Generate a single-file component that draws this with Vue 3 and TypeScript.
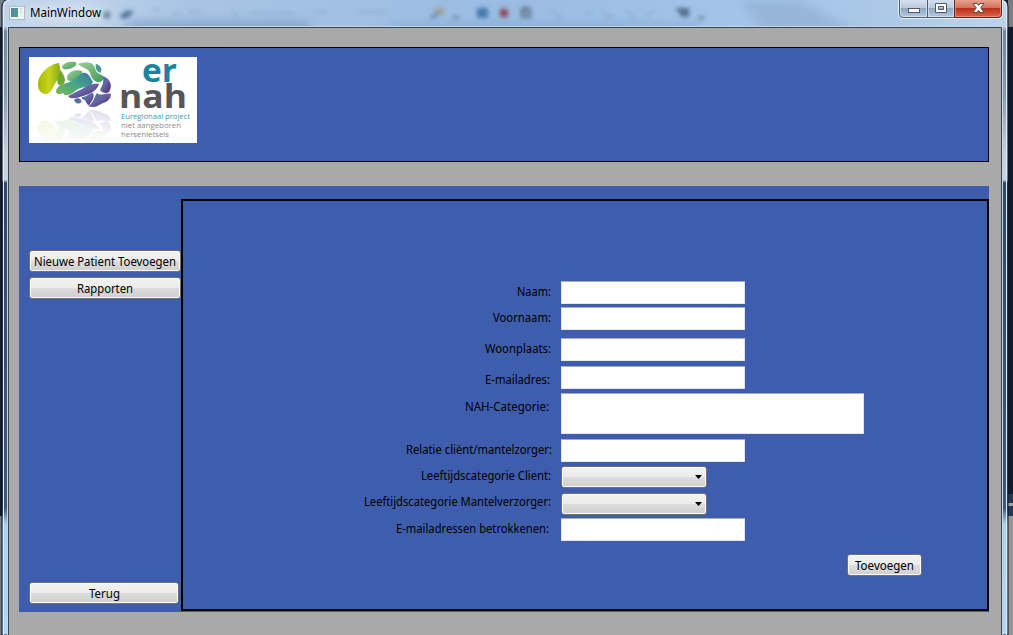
<script setup lang="ts">
interface Field {
  label: string
  kind: 'text' | 'area' | 'combo'
  gap: number
  drop: number
  inset: number
  width: number
}

const fields: Field[] = [
  { label: 'Naam:', kind: 'text', gap: 0, drop: 2, inset: 10, width: 34 },
  { label: 'Voornaam:', kind: 'text', gap: 3, drop: 2, inset: 10, width: 58 },
  { label: 'Woonplaats:', kind: 'text', gap: 8, drop: 2, inset: 10, width: 66 },
  { label: 'E-mailadres:', kind: 'text', gap: 5, drop: 5, inset: 11, width: 65 },
  { label: 'NAH-Categorie:', kind: 'area', gap: 4, drop: 5, inset: 12, width: 84 },
  { label: 'Relatie cliënt/mantelzorger:', kind: 'text', gap: 5, drop: 2, inset: 9, width: 146 },
  { label: 'Leeftijdscategorie Client:', kind: 'combo', gap: 4, drop: 1, inset: 10, width: 130 },
  { label: 'Leeftijdscategorie Mantelverzorger:', kind: 'combo', gap: 5, drop: 0, inset: 10, width: 187 },
  { label: 'E-mailadressen betrokkenen:', kind: 'text', gap: 3, drop: 2, inset: 12, width: 153 },
]
</script>

<template>
  <div class="window">
    <svg class="glass" width="1013" height="635" viewBox="0 0 1013 635" aria-hidden="true">
      <defs>
        <linearGradient id="bar" x1="0" x2="1" y1="0" y2="0">
          <stop offset="0" stop-color="#c0d3ea" />
          <stop offset=".07" stop-color="#c0d4ea" />
          <stop offset=".18" stop-color="#a9c4e4" />
          <stop offset=".5" stop-color="#9abce3" />
          <stop offset=".78" stop-color="#a5c6eb" />
          <stop offset=".86" stop-color="#aac7e7" />
          <stop offset="1" stop-color="#bdd3ec" />
        </linearGradient>
        <linearGradient id="side" x1="0" x2="0" y1="0" y2="635" gradientUnits="userSpaceOnUse">
          <stop offset="0" stop-color="#bdd3ec" />
          <stop offset=".042" stop-color="#b4c9df" />
          <stop offset=".05" stop-color="#75869a" />
          <stop offset=".15" stop-color="#8b9aad" />
          <stop offset=".24" stop-color="#c6cedb" />
          <stop offset=".283" stop-color="#c9d2df" />
          <stop offset=".288" stop-color="#31486a" />
          <stop offset=".8" stop-color="#405878" />
          <stop offset=".825" stop-color="#a9cff6" />
          <stop offset="1" stop-color="#b2d5fa" />
        </linearGradient>
        <linearGradient id="ctl" x1="0" x2="0" y1="0" y2="1">
          <stop offset="0" stop-color="#d4e0ee" />
          <stop offset=".46" stop-color="#b9cadd" />
          <stop offset=".48" stop-color="#91a7c1" />
          <stop offset="1" stop-color="#b4cbe3" />
        </linearGradient>
        <linearGradient id="cls" x1="0" x2="0" y1="0" y2="1">
          <stop offset="0" stop-color="#e5a08f" />
          <stop offset=".46" stop-color="#d3705a" />
          <stop offset=".48" stop-color="#bd3018" />
          <stop offset="1" stop-color="#d9684c" />
        </linearGradient>
        <filter id="soft" x="-40%" y="-80%" width="180%" height="260%"><feGaussianBlur stdDeviation="2" /></filter>
        <filter id="haze" x="0" y="-30" width="1013" height="90" filterUnits="userSpaceOnUse"><feGaussianBlur stdDeviation="6 4" /></filter>
        <clipPath id="top"><rect x="3" y="0" width="1004" height="26" /></clipPath>
      </defs>
      <rect width="1013" height="635" fill="#111c2c" />
      <rect width="4" height="27" fill="#777d87" />
      <rect y="516" width="2" height="119" fill="#777b80" />
      <rect x="1008" width="5" height="27" fill="#7b7d82" />
      <rect x="1008" y="494" width="5" height="22" fill="#263750" />
      <rect x="1008" y="503" width="5" height="3" fill="#9ba4af" />
      <rect x="1008" y="516" width="5" height="119" fill="#969696" />
      <path d="M2 635V7Q2 0 9 -1H1001Q1008 0 1008 7V635Z" fill="url(#side)" stroke="#0c1420" />
      <path d="M3 27V7Q3 0 9 0H1001Q1007 0 1007 7V27Z" fill="url(#bar)" />
      <g clip-path="url(#top)">
        <g filter="url(#haze)">
          <ellipse cx="65" cy="14" rx="48" ry="9" fill="#d9e4f1" opacity=".8" />
          <path d="M130 20H310V34H120Z" fill="#7e9fc6" opacity=".7" />
          <path d="M390 22H700V34H390Z" fill="#86a9d2" opacity=".6" />
          <path d="M740 0H800L860 34H765Z" fill="#8facd0" opacity=".65" />
        </g>
        <g filter="url(#soft)">
          <circle cx="107" cy="15" r="4" fill="#7088a5" />
          <path d="M119 17L124 12 130 10 134 12 126 19Z" fill="#49739e" />
          <g fill="none" stroke="#7f9fc0" stroke-width="2" opacity=".65">
            <path d="M153 10h7M172 13h9M189 12h12M231 10l7 7M250 13h44M313 12h14M358 12h28M552 10l5 6 5 2M585 13h8M602 11l5 6h8M627 9l5 9h5M646 17l9-7" />
          </g>
          <path d="M433 8H444V14L438 16Z" fill="#a1a294" />
          <path d="M431 18L438 13" stroke="#527fac" stroke-width="3" />
          <rect x="453" y="16" width="5" height="3" fill="#66829f" />
          <rect x="477" y="8" width="11" height="10" fill="#477aa9" />
          <circle cx="504" cy="13" r="4.5" fill="#8b4654" />
          <path d="M522 9H530V17H522ZM525 6V11" fill="#85a0b8" stroke="#536a83" stroke-width="2" />
          <path d="M675 8H689V17H682Z" fill="#58708c" />
          <path d="M698 16H704V20H698Z" fill="#7690ad" />
        </g>
      </g>
      <path d="M3.5 635V7Q3.5 .5 10 .5M1006.5 635V7Q1006.5 .5 1000 .5" fill="none" stroke="#e0eefb" />
      <path d="M7.5 635V26.5H1002.5V635" fill="none" stroke="#c6d7e3" />
      <path d="M8.5 635V27.5H1001.5V635" fill="none" stroke="#344653" />
      <rect x="9.5" y="6.5" width="15" height="13" fill="#f1f3f3" stroke="#b3b9c0" />
      <rect x="11" y="8" width="7" height="9" fill="#54988a" />
      <rect x="11" y="8" width="3" height="9" fill="#547fa0" opacity=".55" />
      <path d="M20 9h2M20 12h2" stroke="#b7c9bd" />
      <path d="M898.5 0V14Q898.5 18.500 903 18.500H998Q1002.500 18.500 1002.500 14V0" fill="none" stroke="#e4f0fb" />
      <path d="M899.500 0H928V17.500H903Q899.500 17.500 899.500 14Z" fill="url(#ctl)" />
      <path d="M928 0H954V17.500H928Z" fill="url(#ctl)" />
      <path d="M954 0H1001.500V14Q1001.500 17.500 998 17.500H954Z" fill="url(#cls)" />
      <path d="M899.500 0V14Q899.500 17.500 903 17.500H954M927.500 0V17" fill="none" stroke="#4e5d73" />
      <path d="M954.500 0V17.500H998Q1001.500 17.500 1001.500 14V0" fill="none" stroke="#62201d" />
      <path d="M900.500 1V14Q901 16.500 904 16.500H926.500V0M928.500 0V16.500H953.500V0" fill="none" stroke="#dce9f6" opacity=".7" />
      <path d="M955.500 0V16.500H998Q1000.500 16 1000.500 13V0" fill="none" stroke="#f0a18e" opacity=".65" />
      <rect x="908.500" y="8.500" width="11" height="4" fill="#fff" stroke="#535967" />
      <path fill-rule="evenodd" d="M935.500 3.500H946.500V12.500H935.500ZM938.500 6.500V9.500H943.500V6.500Z" fill="#fff" stroke="#535967" />
      <path d="M973 3.500H977L978.500 5.500 980 3.500H984L980.700 7.800 984 12.500H980L978.500 10.200 977 12.500H973L976.300 7.800Z" fill="#fff" stroke="#5a4a52" />
    </svg>

    <div class="titlebar"><svg width="90" height="20"><text x="0" y="14" textLength="71" lengthAdjust="spacingAndGlyphs">MainWindow</text></svg></div>
    <main class="client">
      <header class="banner">
        <svg class="logo" width="168" height="86" viewBox="0 0 168 86" role="img" aria-label="er nah">
          <defs>
            <linearGradient id="lime"><stop stop-color="#a5b900" /><stop offset=".5" stop-color="#c7d51e" /><stop offset="1" stop-color="#8eac18" /></linearGradient>
            <linearGradient id="mint" x1="0" x2="1" y1="0" y2="1"><stop stop-color="#a1cf94" /><stop offset="1" stop-color="#3e9b5c" /></linearGradient>
            <linearGradient id="sea" x1="0" x2="1" y1="1" y2="0"><stop stop-color="#79b951" /><stop offset=".55" stop-color="#43a48c" /><stop offset="1" stop-color="#38759d" /></linearGradient>
            <linearGradient id="plum" x1="0" x2="1" y1="0" y2="1"><stop stop-color="#4d82ae" /><stop offset=".5" stop-color="#6761a2" /><stop offset="1" stop-color="#4b2366" /></linearGradient>
            <linearGradient id="fade" x1="0" x2="0" y1="0" y2="1"><stop stop-color="#000" /><stop offset=".3" stop-color="#555" /><stop offset="1" stop-color="#fff" /></linearGradient>
            <mask id="reflection"><rect y="5" width="90" height="50" fill="url(#fade)" /></mask>
            <g id="brain">
              <path d="M30 6C21 7 9 16 9 28C9 35 15 39 20 36C24 33 24 29 27 25C31 19 32 12 30 6Z" fill="url(#lime)" />
              <path d="M31.500 12.500C30 17 27 22 29 27C31 30 36 27 36 23C36 19 33 16 31.500 12.500Z" fill="#72a72d" />
              <path d="M46 5C40 4 34 6 33 10C34 14 39 12 43 11C47 9 49 6 46 5Z" fill="url(#mint)" />
              <path d="M53 14C46 12 39 15 38 20C38 25 43 25 47 21C50 18 55 18 53 14Z" fill="url(#mint)" />
              <path d="M49 7C54 5 62 4 65 9C67 13 67 16 71 17C76 19 75 24 71 25C66 26 62 21 61 16C59 11 53 11 49 7Z" fill="url(#mint)" />
              <path d="M67 7C72 8 74 13 71 16C67 14 66 11 67 7Z" fill="#4f9790" />
              <path d="M54 16C48 19 44 24 38 26C32 27 27 30 27 35C28 38 32 37 34 36C36 40 42 38 46 34C52 29 62 31 64 25C61 20 59 15 54 16Z" fill="url(#sea)" />
              <path d="M70 27C63 26 58 29 53 32C48 34 44 37 39 39C41 43 49 41 54 39C61 37 68 34 70 27Z" fill="url(#plum)" />
              <path d="M73 19C79 20 84 26 81 33C79 38 73 36 71 33C73 29 76 24 73 19Z" fill="url(#plum)" />
              <path d="M45 43C47 40 53 41 52.500 45C49 48 46 46 45 43Z" fill="#576fa2" />
              <path d="M53 40C58 40 60 36 64 36C66 40 63 44 60 48C57 48 58 43 53 42Z" fill="url(#plum)" />
              <path d="M68 36C72 40 77 35 82 37C82 42 78 45 74 46C70 48 66 52 59 49C65 46 65 40 68 36Z" fill="url(#plum)" />
            </g>
          </defs>
          <rect width="168" height="86" fill="#fff" />
          <use href="#brain" />
          <g transform="translate(0 94) scale(1 -.82)" opacity=".2"><use href="#brain" mask="url(#reflection)" /></g>
          <text class="wordmark teal" x="113" y="25" textLength="35" lengthAdjust="spacingAndGlyphs">er</text>
          <text class="wordmark gray" x="90" y="51" textLength="68" lengthAdjust="spacingAndGlyphs">nah</text>
          <text class="tag cyan" x="92" y="62" textLength="69" lengthAdjust="spacingAndGlyphs">Euregionaal project</text>
          <text class="tag" x="92" y="71" textLength="60" lengthAdjust="spacingAndGlyphs">niet aangeboren</text>
          <text class="tag" x="92" y="80" textLength="48" lengthAdjust="spacingAndGlyphs">hersenletsels</text>
        </svg>
      </header>
      <section class="workspace">
        <nav class="sidebar">
          <button><svg width="142" height="18"><text x="0" y="13" textLength="142" lengthAdjust="spacingAndGlyphs">Nieuwe Patient Toevoegen</text></svg></button>
          <button><svg width="56" height="18"><text x="0" y="13" textLength="56" lengthAdjust="spacingAndGlyphs">Rapporten</text></svg></button>
          <button class="back"><svg width="31" height="18"><text x="0" y="13" textLength="31" lengthAdjust="spacingAndGlyphs">Terug</text></svg></button>
        </nav>
        <form class="editor" @submit.prevent>
          <div v-for="field in fields" :key="field.label" class="row" :style="{ marginTop: field.gap + 'px' }">
            <label :style="{ paddingTop: field.drop + 'px', paddingRight: field.inset + 'px' }">
              <svg :width="field.width" height="18"><text x="0" y="13" :textLength="field.width" lengthAdjust="spacingAndGlyphs">{{ field.label }}</text></svg>
            </label>
            <button v-if="field.kind === 'combo'" type="button" class="combo" :aria-label="field.label">
              <svg width="7" height="4"><path d="M0 0H7L3.500 4Z" /></svg>
            </button>
            <textarea v-else-if="field.kind === 'area'" class="box area" />
            <input v-else class="box" type="text" />
          </div>
          <button class="add"><svg width="59" height="18"><text x="0" y="13" textLength="59" lengthAdjust="spacingAndGlyphs">Toevoegen</text></svg></button>
        </form>
      </section>
    </main>
  </div>
</template>

<style>
body { margin: 0; overflow: hidden; }
</style>

<style scoped>
.window, .window * { box-sizing: border-box; }
.window { position: relative; width: 1013px; height: 635px; overflow: hidden; font: 12px "Noto Sans", "Open Sans", sans-serif; }
svg { display: block; overflow: visible; flex: none; }
.glass { position: absolute; inset: 0; }
.titlebar { position: relative; height: 28px; padding: 3px 0 0 30px; }
.client { position: relative; width: 992px; height: 607px; margin-left: 9px; padding: 19px 12px 0 10px; background: #a9a9a9; }
.banner { height: 115px; padding: 9px; border: 1px solid #000; background: #3f5dad; }
.workspace { display: flex; height: 426px; margin-top: 24px; background: #3f5dad; }
.sidebar { display: flex; flex-direction: column; width: 162px; padding: 64px 0 8px 10px; gap: 5px; }
button { display: flex; align-items: center; justify-content: center; width: 152px; height: 22px; padding: 2px 0 0; border: 1px solid #707070; border-radius: 3px; box-shadow: inset 0 0 0 1px #fafafa; background: linear-gradient(#f2f2f2, #ebebeb 50%, #dddddd 50%, #cfcfcf); font: inherit; }
.back { width: 150px; margin-top: auto; }
.editor { width: 808px; height: 412px; margin-top: 13px; padding-top: 80px; border: 2px solid #000; }
.row { display: grid; grid-template-columns: 378px 1fr; align-items: start; }
label { display: flex; justify-content: flex-end; height: 0; }
.box { display: block; width: 184px; height: 23px; margin: 0; padding: 2px; border: 1px solid; border-color: #abadb3 #e2e3ea #e3e9ef; border-radius: 1px; background: #fff; outline: 0; resize: none; }
.area { width: 303px; height: 41px; }
.combo { width: 146px; justify-content: flex-end; padding: 0 4px 0 0; }
.add { width: 75px; margin: 13px 0 0 664px; }
.wordmark { font: 700 33px "Open Sans", sans-serif; }
.teal { fill: #1983a0; }
.gray { fill: #555659; }
.tag { font: 8px "Open Sans", sans-serif; fill: #8b8b8d; }
.cyan { fill: #3c9bb1; }
</style>
